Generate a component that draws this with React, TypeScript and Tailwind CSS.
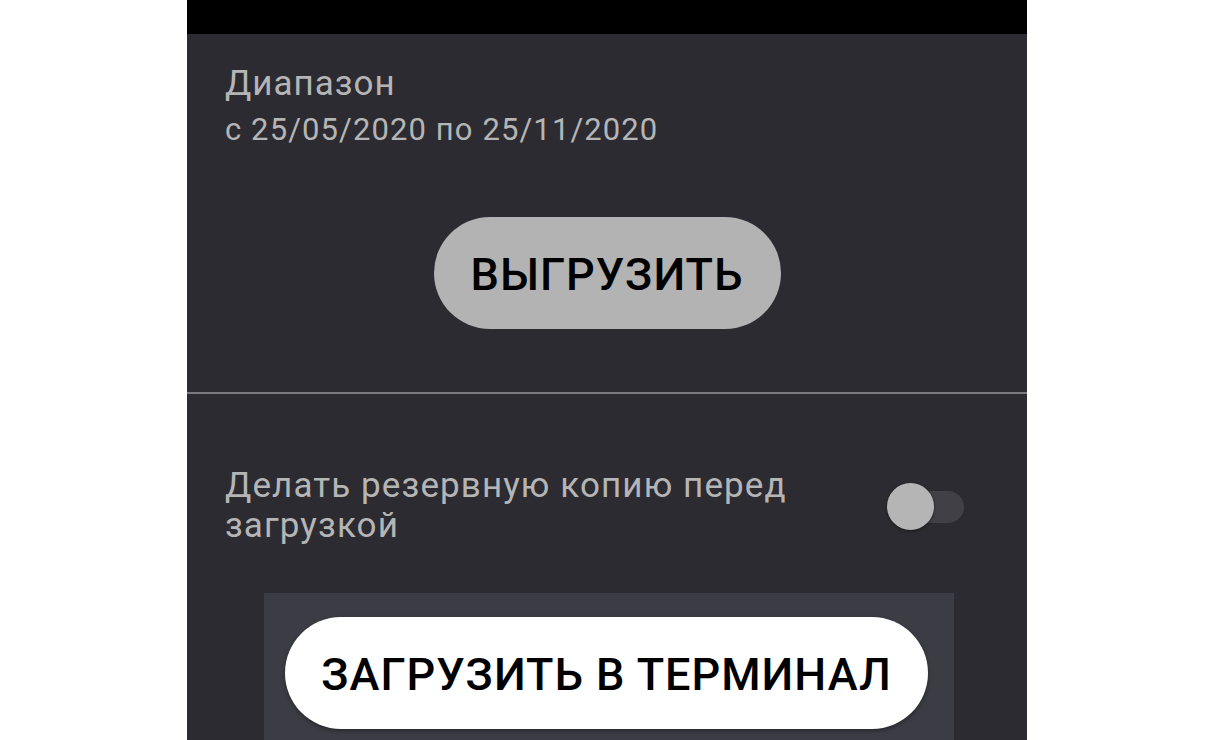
export default function App() {
  return (
    <div className="min-h-[740px] bg-white" style={{ fontFamily: 'Roboto, "Noto Sans", sans-serif' }}>
      <div className="mx-auto h-[740px] w-[840px] overflow-hidden bg-[#2c2b31]">
        <div className="h-[34px] bg-black" />

        {/* Export section */}
        <section className="px-[38px] pt-[30px]">
          <h2 className="text-[35px] leading-[40px] tracking-[1px] text-[#b5b5b5]">Диапазон</h2>
          <p className="mt-[8px] text-[31px] leading-[36px] tracking-[1.1px] text-[#b5b5b5]">с 25/05/2020 по 25/11/2020</p>
          <div className="mt-[69px] flex justify-center">
            <button className="flex h-[112px] w-[347px] items-center justify-center rounded-full bg-[#b3b3b3] pt-[3px] text-[45px] leading-[52px] font-medium tracking-[1px] text-black">
              ВЫГРУЗИТЬ
            </button>
          </div>
        </section>

        <div className="mt-[63px] h-[2px] bg-[#7c7c80]" />

        {/* Import section */}
        <section className="pt-[72px]">
          <div className="flex items-center pr-[63px] pl-[38px]">
            <p className="flex-1 pr-[60px] text-[35px] leading-[40px] tracking-[1.1px] text-[#b5b5b5]">
              Делать резервную копию перед загрузкой
            </p>
            <div className="relative h-[47px] w-[77px] shrink-0">
              <div className="absolute top-[8px] right-0 h-[32px] w-[68px] rounded-full bg-[#414046]" />
              <div className="absolute top-0 left-0 h-[47px] w-[47px] rounded-full bg-[#b5b5b5] shadow-[0_1px_3px_rgba(0,0,0,0.5)]" />
            </div>
          </div>

          <div className="mt-[47px] ml-[77px] w-[690px] bg-[#3c3c44] pt-[24px] pb-[20px]">
            <button className="ml-[21px] flex h-[112px] w-[643px] items-center justify-center rounded-full bg-white pt-[3px] text-[45px] leading-[52px] font-medium tracking-[1px] text-black shadow-[0_2px_4px_rgba(0,0,0,0.35)]">
              ЗАГРУЗИТЬ В ТЕРМИНАЛ
            </button>
          </div>
        </section>
      </div>
    </div>
  )
}
